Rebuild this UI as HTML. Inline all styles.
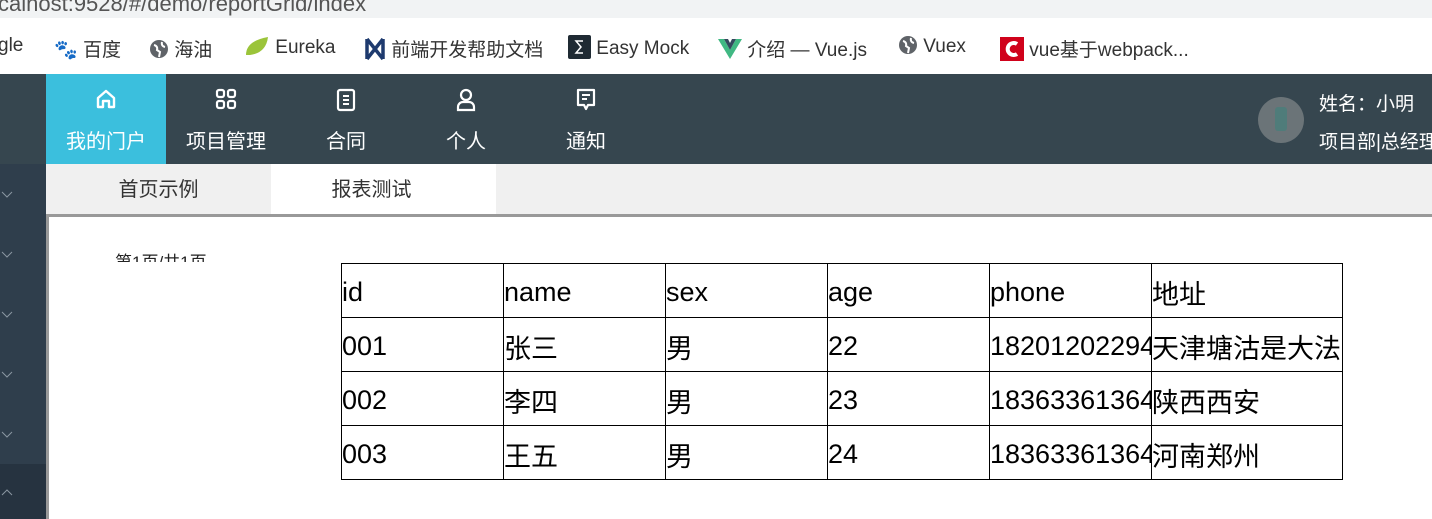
<!DOCTYPE html>
<html><head><meta charset="utf-8"><style>
*{margin:0;padding:0;box-sizing:border-box}
body{width:1432px;height:519px;overflow:hidden;position:relative;background:#fff;font-family:"Liberation Sans","Noto Sans CJK SC",sans-serif}
.abs{position:absolute}
.url{left:0;top:0;width:1432px;height:18px;background:#f1f3f4;overflow:hidden}
.url span{position:absolute;left:-2px;top:-9px;font-size:22px;color:#555}
.bm{left:0;top:18px;width:1432px;height:56px;background:#fff}
.bm .it{position:absolute;top:17px;font-size:19px;color:#333;white-space:nowrap}
.hdr{left:0;top:74px;width:1432px;height:90px;background:#36464f}
.nav{position:absolute;top:0;width:120px;height:90px;color:#fff;text-align:center}
.nav .t{position:absolute;top:51px;left:0;width:120px;font-size:20px}
.nav svg{position:absolute;top:14px;left:49px}
.side{left:0;top:164px;width:46px;height:355px;background:#2f3e4c}
.chev{position:absolute;left:0;width:14px;height:14px}
.tabs{left:46px;top:164px;width:1386px;height:50px;background:#f0f0f0}
.tab{position:absolute;top:0;height:50px;line-height:52px;font-size:20px;color:#333;text-align:center}
table{position:absolute;left:341px;top:263px;border-collapse:collapse;table-layout:fixed;width:1001px;font-size:27px;color:#000;font-family:"Liberation Sans","Noto Sans CJK SC",sans-serif}
td{border:1px solid #000;height:54px;padding:4px 0 0 0;white-space:nowrap;overflow:hidden}
</style></head><body>
<div class="abs url"><span>calhost:9528/#/demo/reportGrid/index</span></div>
<div class="abs bm">
 <div class="it" style="left:-2px">gle</div>
 <div class="it" style="left:54px"><span style="color:#2e6ee6">🐾</span> 百度</div>
 <div class="it" style="left:149px"><svg width="20" height="20" style="vertical-align:-3px"><circle cx="10" cy="10" r="9" fill="#5f6368"/><path d="M5 6q4 1 3 5l3 2-1 5M13 3q-1 4 3 5" stroke="#fff" stroke-width="2" fill="none"/></svg> 海油</div>
 <div class="it" style="left:244px"><svg width="26" height="22" style="vertical-align:-4px"><path d="M2 20Q2 6 24 2Q22 18 6 20Z" fill="#9bc43a"/></svg> Eureka</div>
 <div class="it" style="left:364px"><svg width="22" height="24" style="vertical-align:-5px"><path d="M3 2v20M19 2v20M3 2l16 20M19 2L3 22" stroke="#1e3a6e" stroke-width="3.5" fill="none"/></svg> 前端开发帮助文档</div>
 <div class="it" style="left:568px"><svg width="23" height="24" style="vertical-align:-5px"><rect width="23" height="24" rx="2" fill="#1f2a33"/><path d="M15 6H8l5 6-5 6h7" stroke="#fff" stroke-width="1.5" fill="none"/></svg> Easy Mock</div>
 <div class="it" style="left:718px"><svg width="24" height="20" style="vertical-align:-3px"><path d="M0 0h6l6 11 6-11h6L12 20z" fill="#41b883"/><path d="M6 0h4l2 4 2-4h4l-6 11z" fill="#35495e"/></svg> 介绍 — Vue.js</div>
 <div class="it" style="left:898px"><svg width="20" height="20" style="vertical-align:-3px"><circle cx="10" cy="10" r="9" fill="#5f6368"/><path d="M5 6q4 1 3 5l3 2-1 5M13 3q-1 4 3 5" stroke="#fff" stroke-width="2" fill="none"/></svg> Vuex</div>
 <div class="it" style="left:1000px"><svg width="24" height="24" style="vertical-align:-5px"><rect width="24" height="24" fill="#d0021b"/><path d="M17 7a6 6 0 1 0 0 10" stroke="#fff" stroke-width="4" fill="none"/></svg> vue基于webpack...</div>
</div>
<div class="abs hdr">
 <div class="nav" style="left:46px;background:#3bbfdd"><svg width="22" height="22" viewBox="0 0 22 22"><path d="M3 10L11 3l8 7v9h-5v-6H8v6H3z" stroke="#fff" stroke-width="2.4" fill="none" stroke-linejoin="round"/></svg><div class="t">我的门户</div></div>
 <div class="nav" style="left:166px"><svg width="22" height="22"><rect x="2" y="2" width="7" height="7" rx="2" stroke="#fff" stroke-width="2.2" fill="none"/><rect x="13" y="2" width="7" height="7" rx="2" stroke="#fff" stroke-width="2.2" fill="none"/><rect x="2" y="13" width="7" height="7" rx="2" stroke="#fff" stroke-width="2.2" fill="none"/><rect x="13" y="13" width="7" height="7" rx="2" stroke="#fff" stroke-width="2.2" fill="none"/></svg><div class="t">项目管理</div></div>
 <div class="nav" style="left:286px"><svg width="22" height="24"><rect x="3" y="2" width="16" height="20" rx="2" stroke="#fff" stroke-width="2.2" fill="none"/><path d="M8 8h6M8 12h6M8 16h6" stroke="#fff" stroke-width="2"/></svg><div class="t">合同</div></div>
 <div class="nav" style="left:406px"><svg width="22" height="24"><circle cx="11" cy="7" r="5" stroke="#fff" stroke-width="2.2" fill="none"/><path d="M3 22v-3a5 5 0 0 1 5-5h6a5 5 0 0 1 5 5v3z" stroke="#fff" stroke-width="2.2" fill="none"/></svg><div class="t">个人</div></div>
 <div class="nav" style="left:526px"><svg width="22" height="24"><path d="M3 2h16v15h-6l-2 4-2-4H3z" stroke="#fff" stroke-width="2.2" fill="none" stroke-linejoin="round"/><path d="M7 7h8M7 11h5" stroke="#fff" stroke-width="2"/></svg><div class="t">通知</div></div>
 <div style="position:absolute;left:1258px;top:23px;width:46px;height:46px;border-radius:50%;background:#6b7478"><div style="position:absolute;left:17px;top:10px;width:12px;height:24px;background:#4f7c7a;border-radius:3px"></div></div>
 <div style="position:absolute;left:1319px;top:15px;color:#fff;font-size:19px;white-space:nowrap">姓名：小明</div>
 <div style="position:absolute;left:1319px;top:53px;color:#fff;font-size:19px;white-space:nowrap">项目部|总经理</div>
</div>
<div class="abs side">
 <svg class="chev" style="top:24px" viewBox="0 0 14 14"><path d="M2 4l5 5 5-5" stroke="#8a96a1" fill="none"/></svg>
 <svg class="chev" style="top:84px" viewBox="0 0 14 14"><path d="M2 4l5 5 5-5" stroke="#8a96a1" fill="none"/></svg>
 <svg class="chev" style="top:144px" viewBox="0 0 14 14"><path d="M2 4l5 5 5-5" stroke="#8a96a1" fill="none"/></svg>
 <svg class="chev" style="top:204px" viewBox="0 0 14 14"><path d="M2 4l5 5 5-5" stroke="#8a96a1" fill="none"/></svg>
 <svg class="chev" style="top:264px" viewBox="0 0 14 14"><path d="M2 4l5 5 5-5" stroke="#8a96a1" fill="none"/></svg>
 <div style="position:absolute;left:0;top:300px;width:46px;height:55px;background:#263340"></div>
 <svg class="chev" style="top:322px" viewBox="0 0 14 14"><path d="M2 9l5-5 5 5" stroke="#8a96a1" fill="none"/></svg>
</div>
<div class="abs tabs">
 <div class="tab" style="left:0;width:225px">首页示例</div>
 <div class="tab" style="left:225px;width:225px;background:#fff;text-indent:-24px">报表测试</div>
</div>
<div class="abs" style="left:46px;top:214px;width:1386px;height:3px;background:#999"></div>
<div class="abs" style="left:46px;top:214px;width:3px;height:305px;background:#999"></div>
<div class="abs" style="left:115px;top:248px;height:14px;overflow:hidden;font-size:17px;color:#222">第1页/共1页</div>
<table>
<colgroup><col style="width:162px"><col style="width:162px"><col style="width:162px"><col style="width:162px"><col style="width:162px"><col style="width:191px"></colgroup>
<tr><td>id</td><td>name</td><td>sex</td><td>age</td><td>phone</td><td>地址</td></tr>
<tr><td>001</td><td>张三</td><td>男</td><td>22</td><td>18201202294</td><td>天津塘沽是大法</td></tr>
<tr><td>002</td><td>李四</td><td>男</td><td>23</td><td>18363361364</td><td>陕西西安</td></tr>
<tr><td>003</td><td>王五</td><td>男</td><td>24</td><td>18363361364</td><td>河南郑州</td></tr>
</table>
</body></html>
